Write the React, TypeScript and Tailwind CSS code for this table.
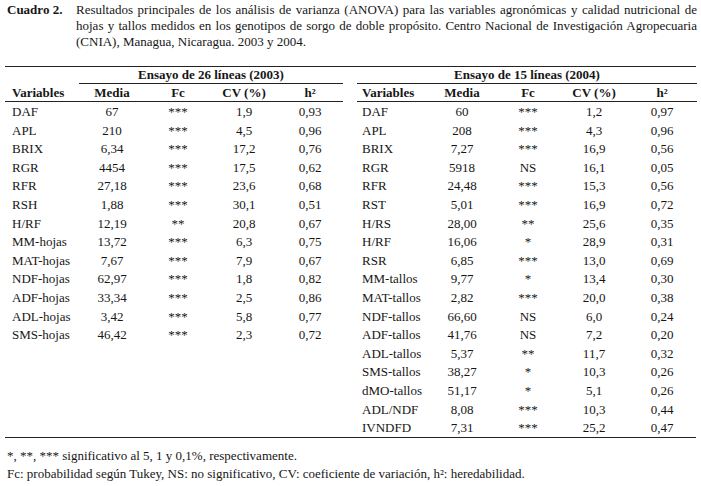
import React from "react";

type Row = [string, string, string, string, string];

const left: Row[] = [
  ["DAF", "67", "***", "1,9", "0,93"],
  ["APL", "210", "***", "4,5", "0,96"],
  ["BRIX", "6,34", "***", "17,2", "0,76"],
  ["RGR", "4454", "***", "17,5", "0,62"],
  ["RFR", "27,18", "***", "23,6", "0,68"],
  ["RSH", "1,88", "***", "30,1", "0,51"],
  ["H/RF", "12,19", "**", "20,8", "0,67"],
  ["MM-hojas", "13,72", "***", "6,3", "0,75"],
  ["MAT-hojas", "7,67", "***", "7,9", "0,67"],
  ["NDF-hojas", "62,97", "***", "1,8", "0,82"],
  ["ADF-hojas", "33,34", "***", "2,5", "0,86"],
  ["ADL-hojas", "3,42", "***", "5,8", "0,77"],
  ["SMS-hojas", "46,42", "***", "2,3", "0,72"],
];

const right: Row[] = [
  ["DAF", "60", "***", "1,2", "0,97"],
  ["APL", "208", "***", "4,3", "0,96"],
  ["BRIX", "7,27", "***", "16,9", "0,56"],
  ["RGR", "5918", "NS", "16,1", "0,05"],
  ["RFR", "24,48", "***", "15,3", "0,56"],
  ["RST", "5,01", "***", "16,9", "0,72"],
  ["H/RS", "28,00", "**", "25,6", "0,35"],
  ["H/RF", "16,06", "*", "28,9", "0,31"],
  ["RSR", "6,85", "***", "13,0", "0,69"],
  ["MM-tallos", "9,77", "*", "13,4", "0,30"],
  ["MAT-tallos", "2,82", "***", "20,0", "0,38"],
  ["NDF-tallos", "66,60", "NS", "6,0", "0,24"],
  ["ADF-tallos", "41,76", "NS", "7,2", "0,20"],
  ["ADL-tallos", "5,37", "**", "11,7", "0,32"],
  ["SMS-tallos", "38,27", "*", "10,3", "0,26"],
  ["dMO-tallos", "51,17", "*", "5,1", "0,26"],
  ["ADL/NDF", "8,08", "***", "10,3", "0,44"],
  ["IVNDFD", "7,31", "***", "25,2", "0,47"],
];

function Table({
  title,
  rows,
  cols,
  width,
  pad,
  fullRule,
}: {
  title: string;
  rows: Row[];
  cols: string;
  width: string;
  pad: string;
  fullRule: boolean;
}) {
  return (
    <div className={width}>
      {/* trial header */}
      <div className={`grid ${cols} h-[17px]`}>
        {!fullRule && <div />}
        <div
          className={`${fullRule ? "col-span-5" : "col-span-4"} border-b border-[#222] text-center font-bold leading-[16px]`}
        >
          {title}
        </div>
      </div>

      {/* column names */}
      <div className={`grid ${cols} h-[18px] border-b border-[#222] font-bold leading-[17px]`}>
        <div className={pad}>Variables</div>
        <div className="text-center">Media</div>
        <div className="text-center">Fc</div>
        <div className="text-center">CV (%)</div>
        <div className="text-center">h²</div>
      </div>

      {rows.map((r) => (
        <div key={r[0]} className={`grid ${cols} h-[18.6px] leading-[20px]`}>
          <div className={pad}>{r[0]}</div>
          <div className="text-center">{r[1]}</div>
          <div className="text-center">{r[2]}</div>
          <div className="text-center">{r[3]}</div>
          <div className="text-center">{r[4]}</div>
        </div>
      ))}
    </div>
  );
}

export default function App() {
  return (
    <div className="w-[701px] h-[486px] bg-white text-[#161616] font-['Liberation_Serif',serif] text-[13px] overflow-hidden">
      {/* caption */}
      <div className="flex pl-[7px] pr-[4px] pt-[2px] leading-[16px]">
        <div className="w-[69px] shrink-0 font-bold">Cuadro 2.</div>
        <div className="flex-1">
          <div className="text-justify [text-align-last:justify]">
            Resultados principales de los análisis de varianza (ANOVA) para las variables agronómicas y calidad nutricional de
          </div>
          <div className="text-justify [text-align-last:justify]">
            hojas y tallos medidos en los genotipos de sorgo de doble propósito. Centro Nacional de Investigación Agropecuaria
          </div>
          <div>(CNIA), Managua, Nicaragua. 2003 y 2004.</div>
        </div>
      </div>

      {/* tables */}
      <div className="mx-[5px] mt-[16px] flex gap-[14px] border-t border-b border-[#222] h-[372px]">
        <Table
          title="Ensayo de 26 líneas (2003)"
          rows={left}
          cols="grid-cols-[74px_66px_66px_66px_66px]"
          width="w-[338px]"
          pad="pl-[7px]"
          fullRule={false}
        />
        <Table
          title="Ensayo de 15 líneas (2004)"
          rows={right}
          cols="grid-cols-[72px_66px_66px_66px_70px]"
          width="w-[340px]"
          pad="pl-[5px]"
          fullRule={true}
        />
      </div>

      {/* notes */}
      <div className="pl-[7px] mt-[9px] text-[13px] leading-[18px]">
        <div>*, **, *** significativo al 5, 1 y 0,1%, respectivamente.</div>
        <div>Fc: probabilidad según Tukey, NS: no significativo, CV: coeficiente de variación, h²: heredabilidad.</div>
      </div>
    </div>
  );
}
